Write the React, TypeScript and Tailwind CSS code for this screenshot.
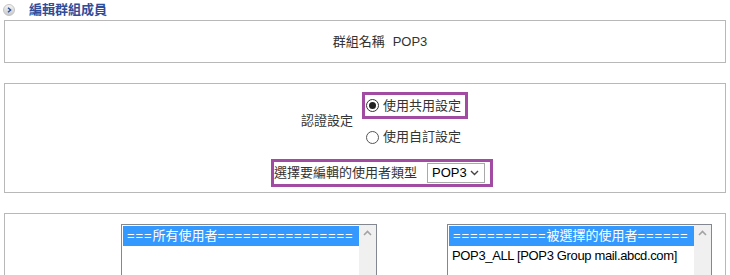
import React from 'react';

// Edit group members page (legacy admin form)

const font = { fontFamily: '"Liberation Sans", "Noto Sans CJK TC", sans-serif' };

const Radio: React.FC<{ checked?: boolean }> = ({ checked }) => (
  <span
    className={
      'w-[13px] h-[13px] rounded-full border flex items-center justify-center bg-white shrink-0 ' +
      (checked ? 'border-[#333333]' : 'border-[#555555]')
    }
  >
    {checked && <span className="w-[7px] h-[7px] rounded-full bg-[#222222]" />}
  </span>
);

const ScrollBar: React.FC = () => (
  <div className="w-[17px] bg-[#f0f0f0] flex flex-col items-center pt-[5px] shrink-0">
    <svg width="9" height="6" viewBox="0 0 9 6">
      <path d="M1 5 L4.5 1.5 L8 5" fill="none" stroke="#a3a3a3" strokeWidth="1.6" />
    </svg>
  </div>
);

const Eq: React.FC<{ n: number }> = ({ n }) => (
  <span className="tracking-[0.9px]">{'='.repeat(n)}</span>
);

interface ListBoxProps {
  width: string;
  header: React.ReactNode;
  items?: string[];
}

const ListBox: React.FC<ListBoxProps> = ({ width, header, items = [] }) => (
  <div className={'h-[130px] border border-[#828790] flex bg-white ' + width}>
    <div className="flex-1 min-w-0 pt-px pl-px">
      <div className="h-[20px] bg-[#3399ff] text-white text-[13px] leading-[20px] pl-[4px] whitespace-nowrap overflow-hidden">
        {header}
      </div>
      {items.map((it) => (
        <div
          key={it}
          className="h-[20px] text-[13px] leading-[20px] pl-[3px] text-black whitespace-nowrap tracking-[-0.35px]"
        >
          {it}
        </div>
      ))}
    </div>
    <ScrollBar />
  </div>
);

export default function App() {
  return (
    <div className="w-[730px] h-[275px] bg-white overflow-hidden text-[#333333]" style={font}>
      {/* Title */}
      <div className="h-[20px] flex items-center pl-[3px]">
        <span className="w-[12px] h-[12px] rounded-full bg-gradient-to-b from-[#f4f4f4] to-[#c9c9c9] border border-[#c4c4c4] flex items-center justify-center">
          <svg width="5" height="6" viewBox="0 0 5 6">
            <path d="M1 0.8 L3.6 3 L1 5.2" fill="none" stroke="#2a4f9c" strokeWidth="1.4" />
          </svg>
        </span>
        <span className="ml-[14px] text-[13px] font-bold text-[#2e4e9c] leading-[20px]">編輯群組成員</span>
      </div>

      {/* Group name */}
      <div className="mx-[4px] h-[43px] border border-[#b8b8b8] flex items-center justify-center pl-[30px] text-[13px]">
        <span>群組名稱</span>
        <span className="ml-[8px]">POP3</span>
      </div>

      {/* Auth settings */}
      <div className="mx-[4px] mt-[20px] h-[110px] border border-[#b8b8b8] pt-[8px] text-[13px]">
        <div className="flex items-center">
          <div className="w-[348px] text-right pt-[3px]">認證設定</div>
          <div className="ml-[9px] flex flex-col">
            <div className="h-[27px] w-[106px] border-[3px] border-[#a24ba3] flex items-center pl-[1px]">
              <Radio checked />
              <span className="ml-[4px]">使用共用設定</span>
            </div>
            <div className="h-[20px] mt-[8px] flex items-center pl-[4px]">
              <Radio />
              <span className="ml-[4px]">使用自訂設定</span>
            </div>
          </div>
        </div>
        <div className="mt-[12px] ml-[266px] w-[222px] h-[28px] border-[3px] border-[#a24ba3] flex items-center">
          <span>選擇要編輯的使用者類型</span>
          <div className="ml-[10px] w-[58px] h-[20px] border border-[#a9a9a9] flex items-center justify-between pl-[4px] pr-[5px] bg-white">
            <span className="text-black">POP3</span>
            <svg width="9" height="6" viewBox="0 0 9 6">
              <path d="M1 1 L4.5 4.5 L8 1" fill="none" stroke="#444444" strokeWidth="1.4" />
            </svg>
          </div>
        </div>
      </div>

      {/* Members */}
      <div className="mx-[4px] mt-[20px] h-[120px] border border-[#b8b8b8] pt-[10px] flex">
        <ListBox
          width="ml-[116px] w-[256px]"
          header={
            <>
              <Eq n={3} />
              所有使用者
              <Eq n={16} />
            </>
          }
        />
        <ListBox
          width="ml-[70px] w-[265px]"
          header={
            <>
              <Eq n={11} />
              被選擇的使用者
              <Eq n={6} />
            </>
          }
          items={['POP3_ALL [POP3 Group mail.abcd.com]']}
        />
      </div>
    </div>
  );
}
